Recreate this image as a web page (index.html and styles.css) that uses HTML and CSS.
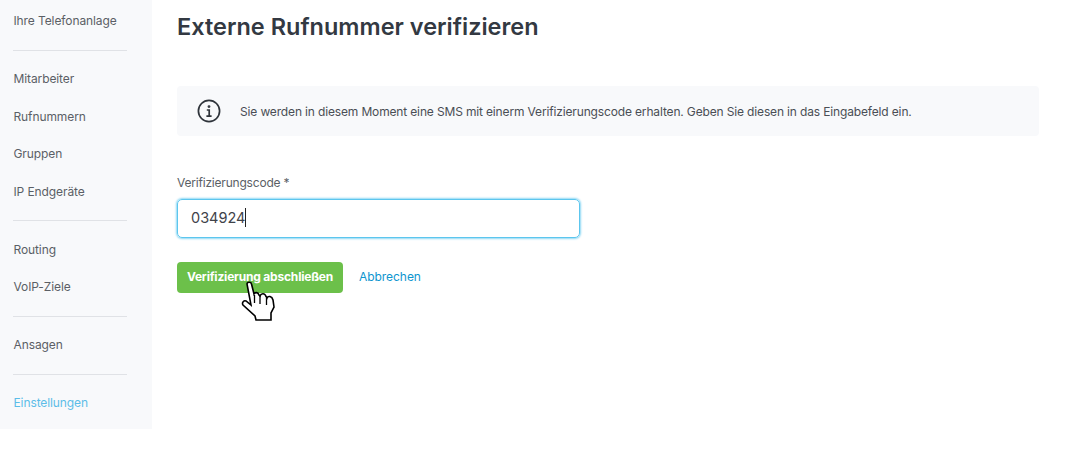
FILE: index.html
```html
<!DOCTYPE html>
<html lang="de">
<head>
<meta charset="utf-8">
<title>Externe Rufnummer verifizieren</title>
<link rel="stylesheet" href="styles.css">
</head>
<body>
<div class="page">
  <nav class="sidebar">
    <a class="nav-item">Ihre Telefonanlage</a>
    <hr class="sep">
    <a class="nav-item">Mitarbeiter</a>
    <a class="nav-item">Rufnummern</a>
    <a class="nav-item">Gruppen</a>
    <a class="nav-item">IP Endgeräte</a>
    <hr class="sep">
    <a class="nav-item">Routing</a>
    <a class="nav-item">VoIP-Ziele</a>
    <hr class="sep">
    <a class="nav-item">Ansagen</a>
    <hr class="sep">
    <a class="nav-item active">Einstellungen</a>
  </nav>
  <main class="main">
    <h1 class="title">Externe Rufnummer verifizieren</h1>
    <div class="notice">
      <svg class="info-icon" width="24" height="24" viewBox="0 0 24 24" fill="none" stroke="#2f343b" stroke-width="1.7">
        <circle cx="12" cy="12" r="10.6"/>
        <circle cx="12" cy="7.6" r="0.6" fill="#2f343b"/>
        <path d="M9.8 11h2.4v6M9.4 17.1h5.2"/>
      </svg>
      <p class="notice-text">Sie werden in diesem Moment eine SMS mit einerm Verifizierungscode erhalten. Geben Sie diesen in das Eingabefeld ein.</p>
    </div>
    <label class="label">Verifizierungscode *</label>
    <div class="input"><span>034924</span><span class="caret"></span></div>
    <div class="actions">
      <button class="btn">Verifizierung abschließen</button>
      <a class="cancel">Abbrechen</a>
      <svg class="cursor" width="36" height="42" viewBox="0 0 36 42">
        <path d="M7 4 C7 2 11 1.500 11.500 4 L14 14 C15 12 18 12 19 15 L20 16 C21 13 25 13 26 16.500 L27 18 C28 15.500 32 16 33 20 L34 27 L31 33 L31 40 L16 40 L15 36 L3 25 C1.500 22.500 4 20 6 21 L11 25 Z" fill="#fff" stroke="#000" stroke-width="1.600" stroke-linejoin="miter"/>
        <path d="M14.500 15v8M20 16v8M26.500 18v7" stroke="#000" stroke-width="1.300" fill="none"/>
      </svg>
    </div>
  </main>
</div>
</body>
</html>
```
FILE: styles.css
```css
* { box-sizing: border-box; }
html, body { margin: 0; padding: 0; background: #fff; }
body { font-family: Inter, "Liberation Sans", sans-serif; overflow: hidden; height: 455px; }
.page { display: flex; align-items: flex-start; }
.sidebar { width: 152px; height: 429px; background: #f8f9fb; padding: 2px 13px 0; flex: none; display: flex; flex-direction: column; }
.nav-item { display: flex; align-items: center; height: 37.5px; padding-left: 0.5px; font-size: 12px; color: #5b5f66; letter-spacing: -0.1px; }
.nav-item.active { color: #5cbde8; }
.sep { width: 114px; height: 1px; margin: 10.5px 0 8.9px; border: 0; background: #e0e2e6; flex: none; }
.main { flex: none; width: 862px; padding-left: 25px; position: relative; }
.title { margin: 13px 0 0; font-size: 23.5px; line-height: 28px; font-weight: 600; color: #333942; }
.notice { margin-top: 45px; width: 862px; height: 50px; background: #f8f9fb; border-radius: 4px; display: flex; align-items: center; padding-left: 20px; gap: 19px; }
.info-icon { flex: none; }
.notice-text { margin: 0; font-size: 12px; color: #4a4e55; letter-spacing: -0.15px; }
.label { display: block; margin-top: 38px; font-size: 12px; line-height: 17px; color: #5b5f66; letter-spacing: -0.2px; }
.input { margin-top: 8px; width: 403px; height: 39px; padding-bottom: 3px; border: 1px solid #5cc6ee; border-radius: 5px; box-shadow: 0 0 2px 1px #8fd8f4; display: flex; align-items: center; padding-left: 13px; font-size: 14.5px; color: #3f434a; }
.caret { width: 1px; height: 19px; background: #222; }
.actions { margin-top: 24px; display: flex; align-items: center; gap: 16px; position: relative; }
.btn { width: 166px; height: 31px; padding: 0 0 2px; border: 0; border-radius: 4px; background: #6cc04a; color: #fff; font: 700 12px Inter, "Liberation Sans", sans-serif; letter-spacing: -0.2px; }
.cancel { font-size: 12px; padding-bottom: 2px; color: #0e95cf; letter-spacing: -0.05px; }
.cursor { position: absolute; left: 63px; top: 18px; }
```
